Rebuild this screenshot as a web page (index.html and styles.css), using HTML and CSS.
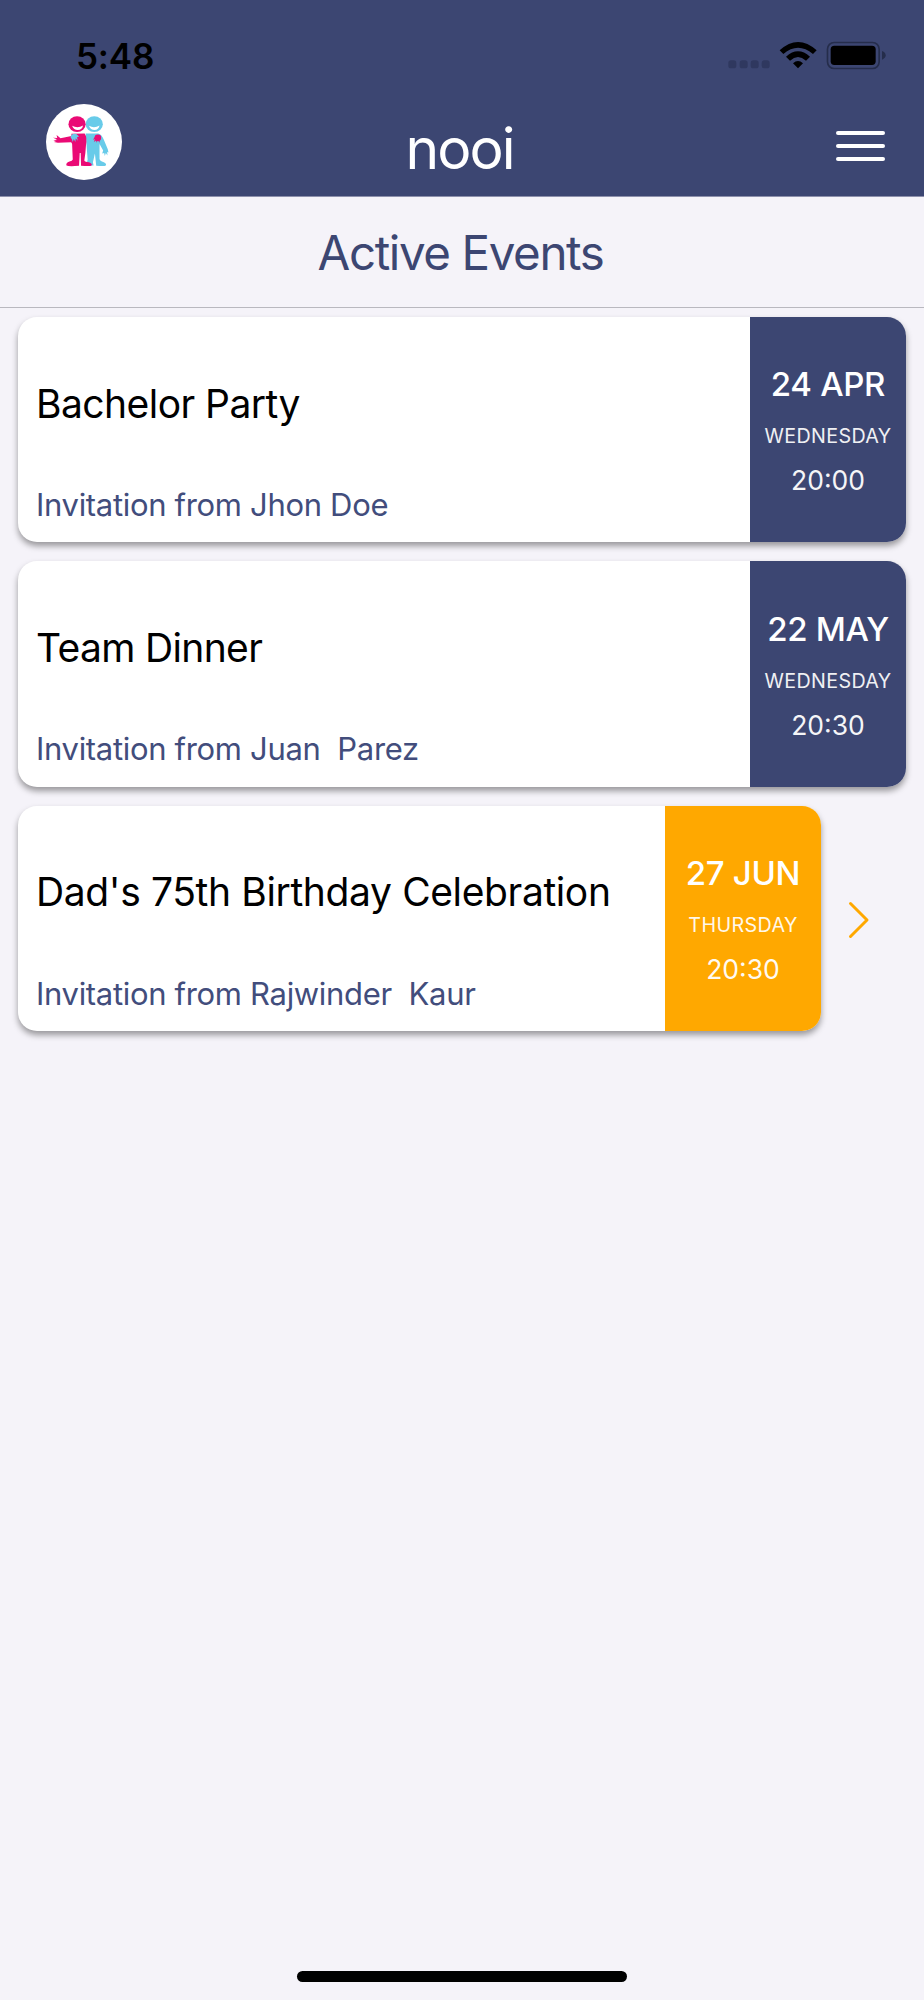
FILE: index.html
```html
<!DOCTYPE html>
<html lang="en">
<head>
<meta charset="utf-8">
<title>nooi</title>
<link rel="stylesheet" href="styles.css">
</head>
<body>
<div class="screen">
  <header class="header">
    <div class="status">
      <span class="clock">5:48</span>
      <svg class="status-icons" viewBox="0 0 480 90">
        <g fill="#2f385f">
          <rect x="7" y="58" width="24" height="24" rx="8"/><rect x="41" y="58" width="24" height="24" rx="8"/>
          <rect x="74" y="58" width="24" height="24" rx="8"/><rect x="107" y="58" width="24" height="24" rx="8"/>
        </g>
        <path d="M161 28Q216 -22 272 28L261 39Q216 1 172 39ZM180 47Q216 15 252 47L240 59Q216 37 192 59ZM201 67Q216 53 231 67L216 82Z"/>
        <rect x="304.500" y="4.500" width="155" height="78" rx="20" fill="none" stroke="#252d4b" stroke-width="5"/>
        <rect x="314" y="14" width="135" height="58" rx="11"/>
        <path d="M468 30Q479 34 479 43Q479 52 468 56Z" fill="#252d4b"/>
      </svg>
    </div>
    <nav class="nav">
      <svg class="logo" viewBox="28 22 230 230">
        <circle cx="143" cy="137" r="115" fill="#fff"/>
        <g fill="#68cbe9">
          <ellipse cx="174" cy="83" rx="26" ry="24"/>
          <path d="M148 111L186 111Q197 114 203 130L215 159L217 169L213 167L214 178L209 170L206 179L204 170L198 172L201 163L190 143L190 188Q190 195 203 198Q212 202 209 208Q206 211 180 209L176 172L170 198L172 208L150 208L154 190Z"/>
        </g>
        <g fill="#ea0a75">
          <ellipse cx="122" cy="83" rx="26" ry="24"/>
          <path d="M105 112L145 111Q153 122 149 147Q148 168 144 193Q146 198 158 198Q169 202 166 208Q164 211 134 209L133 170L130 170L128 209Q96 212 90 208Q87 200 99 196Q108 195 109 190L107 142L104 138L64 139L52 137L60 133L50 134L61 129L49 124L62 125L60 116L72 126L105 119Z"/>
          <circle cx="185" cy="124" r="10"/>
          <path d="M181 115L191 124L190 139L185 132L181 139L180 132L173 137L176 128L170 130Z"/>
        </g>
        <path fill="#68cbe9" d="M103 119Q109 109 120 113L128 120L122 123L124 133L118 126L117 137L112 128L109 137L106 128Q101 125 103 119Z"/>
        <path fill="#fff" d="M107 88Q124 97 140 87Q138 100 124 101Q112 101 107 88ZM158 88Q174 97 190 87Q187 100 175 101Q163 101 158 88Z"/>
      </svg>
      <h1 class="brand">nooi</h1>
      <div class="menu"><i></i><i></i><i></i></div>
    </nav>
  </header>
  <h2 class="heading">Active Events</h2>
  <main class="list">
    <article class="card">
      <div class="info"><h3 class="title t1">Bachelor Party</h3><p class="from">Invitation from Jhon Doe</p></div>
      <div class="when"><span class="date">24 APR</span><span class="day">WEDNESDAY</span><span class="time">20:00</span></div>
    </article>
    <article class="card">
      <div class="info"><h3 class="title t2">Team Dinner</h3><p class="from">Invitation from Juan  Parez</p></div>
      <div class="when"><span class="date">22 MAY</span><span class="day">WEDNESDAY</span><span class="time">20:30</span></div>
    </article>
    <div class="row">
      <article class="card">
        <div class="info"><h3 class="title t3">Dad's 75th Birthday Celebration</h3><p class="from">Invitation from Rajwinder  Kaur</p></div>
        <div class="when pending"><span class="date">27 JUN</span><span class="day">THURSDAY</span><span class="time">20:30</span></div>
      </article>
      <svg class="chevron" viewBox="0 0 22 38"><path d="M2.500 2.500L19 19L2.500 35.500"/></svg>
    </div>
  </main>
  <div class="home"></div>
</div>
</body>
</html>
```
FILE: styles.css
```css
* { box-sizing: border-box; margin: 0; padding: 0; }
body { background: #f5f3f9; font-family: Inter, "Liberation Sans", sans-serif; }
.screen { width: 924px; height: 2000px; display: flex; flex-direction: column; background: #f5f3f9; }
.header { height: 197px; background: #3c4672; border-bottom: 1px solid #8d90ac; }
.status { height: 104px; padding: 41px 38px 0 76px; display: flex; justify-content: space-between; align-items: flex-start; }
.clock { font-size: 35px; font-weight: 600; line-height: 30px; color: #000; letter-spacing: -0.2px; }
.status-icons { width: 160px; height: 30px; }
.nav { height: 92px; padding: 0 39px 0 45.500px; display: grid; grid-template-columns: 77.500px 1fr 49px; align-items: start; }
.logo { width: 76px; height: 76px; }
.brand { font-size: 57px; font-weight: 400; line-height: 60px; padding: 15px 0 0 0; text-align: center; color: #fff; letter-spacing: -1.9px; margin-left: -40px; }
.menu { display: flex; flex-direction: column; gap: 9px; padding-top: 27.300px; }
.menu i { height: 4px; border-radius: 2px; background: #fff; }
.heading { height: 111px; padding: 1px 3px 0 0; border-bottom: 1px solid #b9b8bf; font-size: 47.5px; font-weight: 400; line-height: 110px; letter-spacing: -1.4px; text-align: center; color: #3c4672; }
.list { flex: 1; padding: 9px 18px; display: flex; flex-direction: column; gap: 19px; }
.card { height: 225.400px; display: flex; border-radius: 19px; background: #fff; box-shadow: 0 4px 6px rgba(0,0,0,.38); overflow: hidden; }
.info { flex: 1; padding: 61.600px 0 0 18px; white-space: pre; }
.title { font-size: 39px; font-weight: 400; line-height: 50px; color: #000; }
.t1 { letter-spacing: -0.55px; }
.t2 { letter-spacing: -0.65px; }
.t3 { letter-spacing: -0.37px; }
.from { font-size: 31px; line-height: 40px; margin-top: 56.400px; letter-spacing: -0.32px; color: #424d7c; }
.when { width: 156px; padding-top: 42.200px; display: flex; flex-direction: column; align-items: center; background: #3c4672; color: #fff; }
.pending { background: #ffa800; }
.date { font-size: 33px; font-weight: 500; line-height: 50px; letter-spacing: -0.3px; }
.day { font-size: 19.700px; line-height: 54px; letter-spacing: 0.38px; opacity: .92; }
.time { font-size: 26.500px; line-height: 34px; opacity: .95; }
.row { display: flex; align-items: center; gap: 27px; }
.row .card { width: 803px; }
.chevron { width: 22px; height: 38px; margin-top: 3px; fill: none; stroke: #ffa800; stroke-width: 3; stroke-linecap: round; stroke-linejoin: round; }
.home { width: 330px; height: 11px; margin: 0 auto 18px; border-radius: 6px; background: #000; }
```
